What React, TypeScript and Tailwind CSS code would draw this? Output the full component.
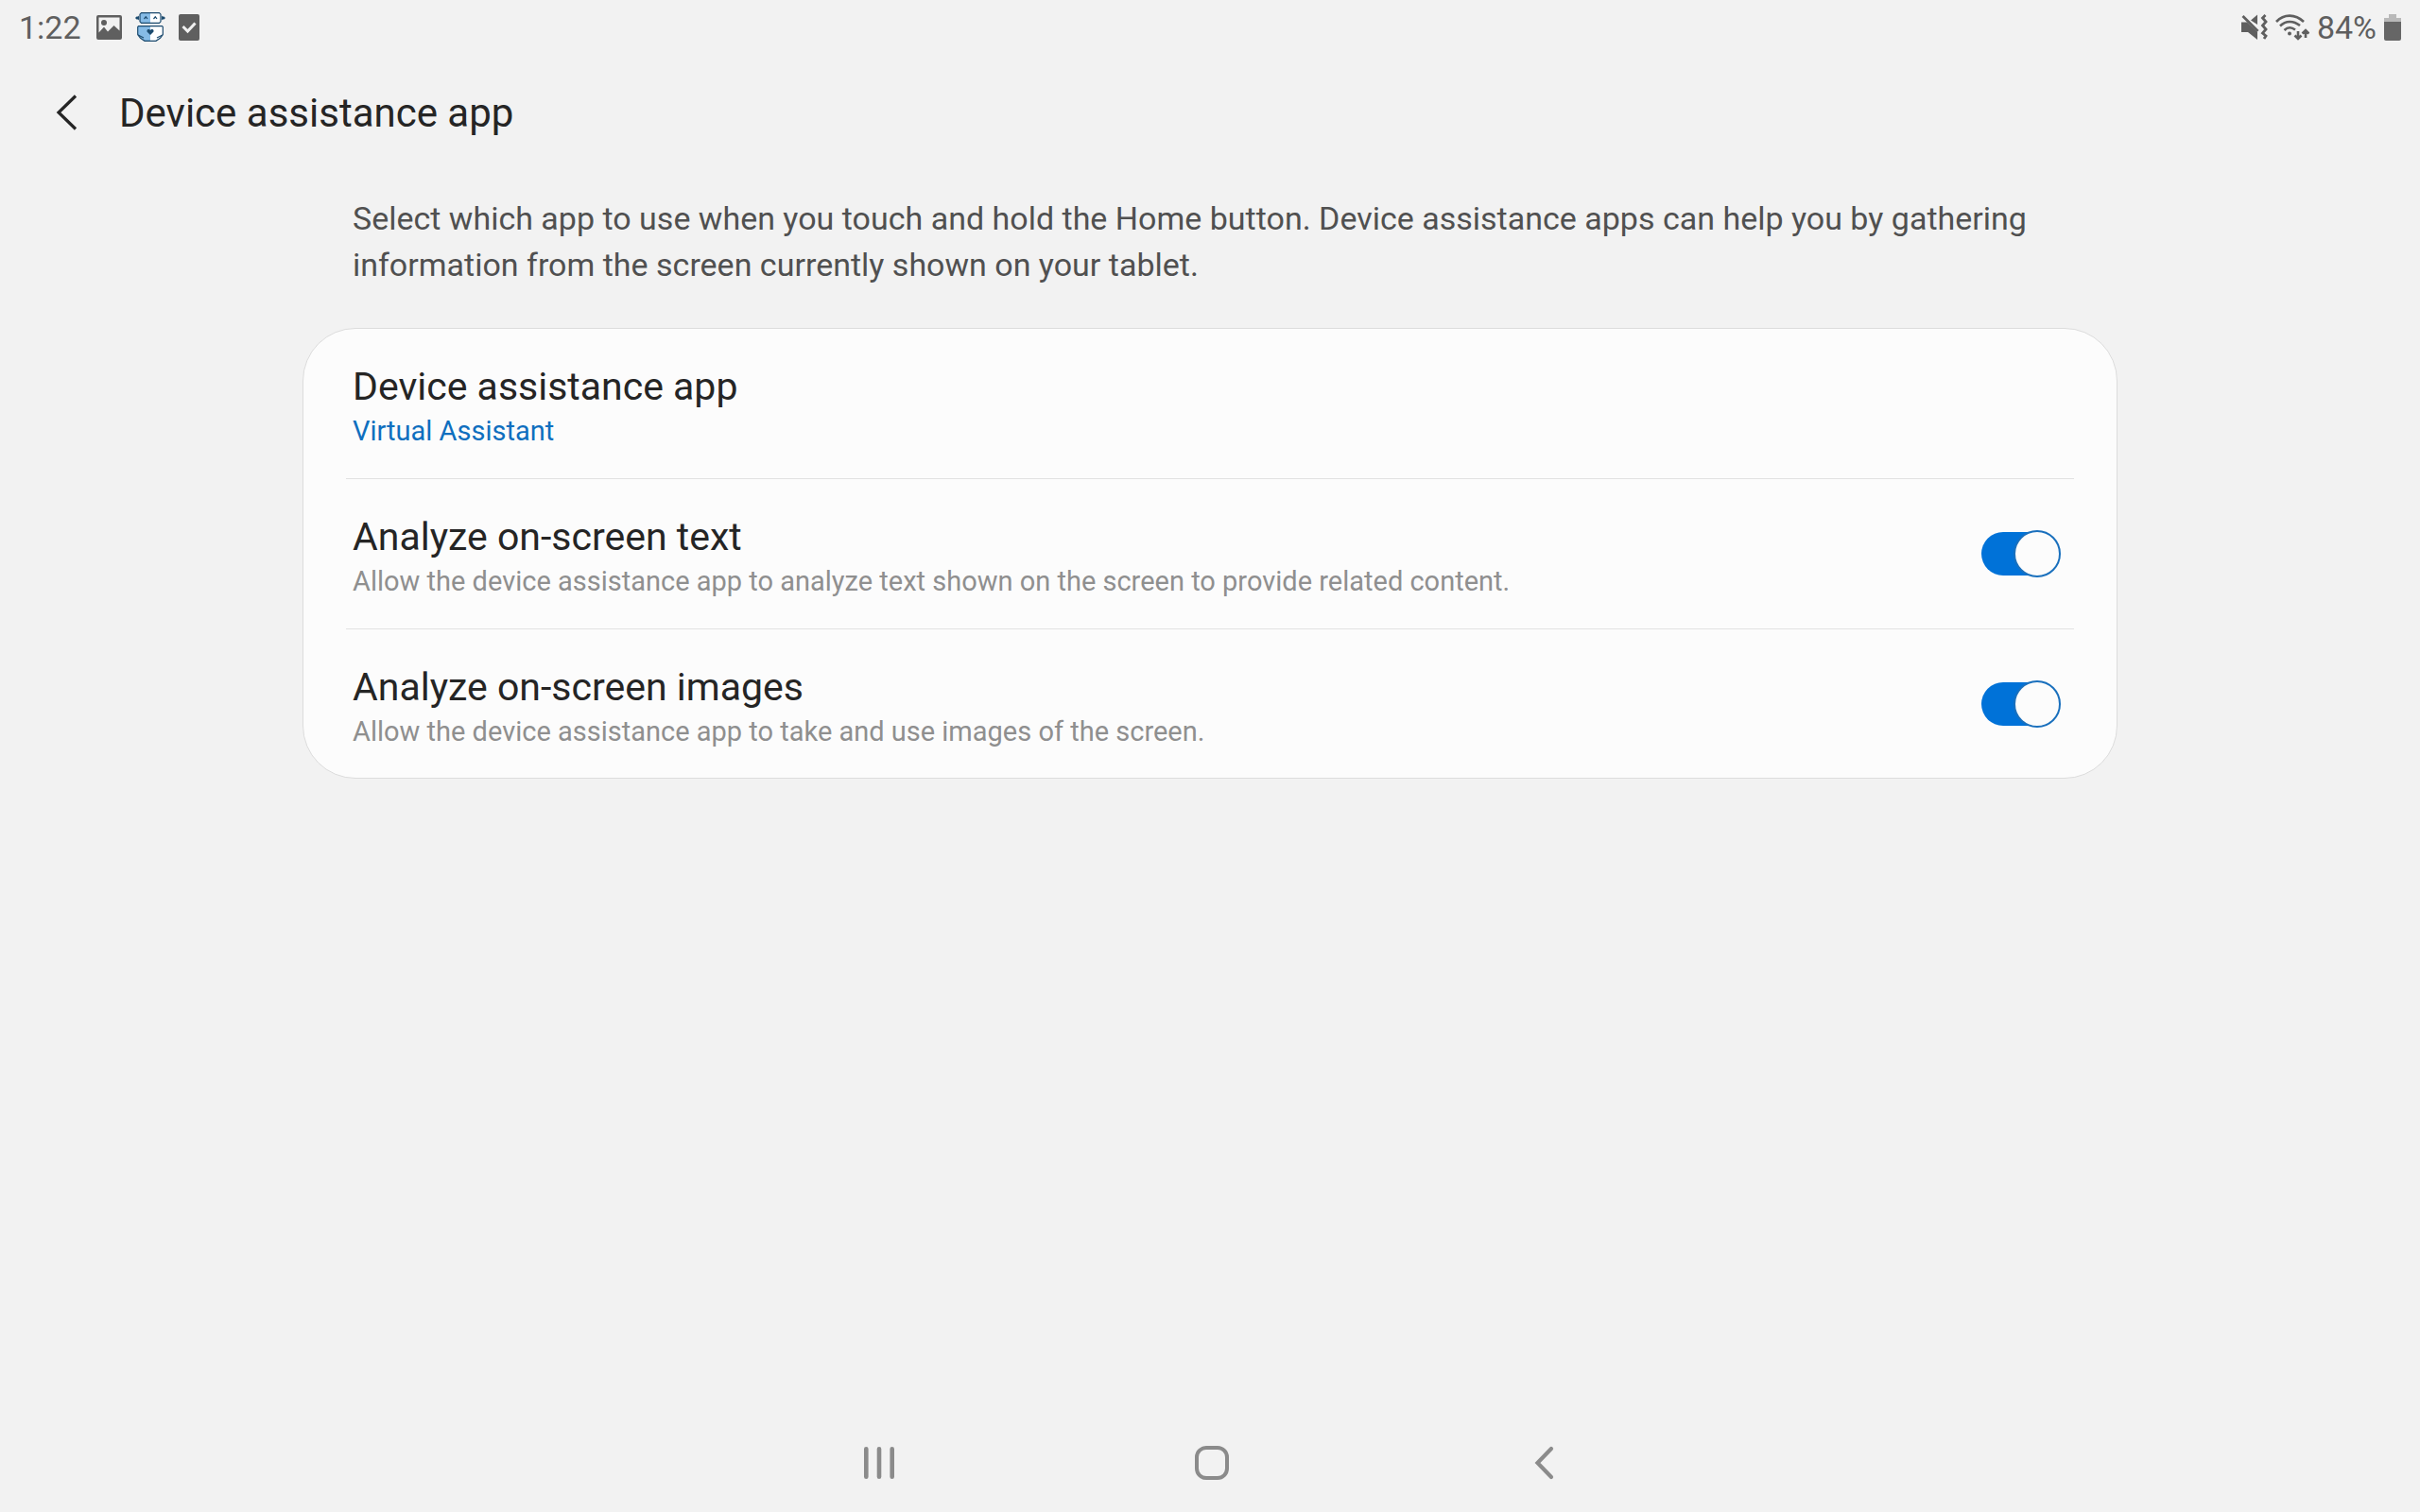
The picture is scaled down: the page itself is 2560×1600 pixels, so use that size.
import { useState } from "react";

const ROWS = [
  {
    id: "analyze-text",
    title: "Analyze on-screen text",
    note: "Allow the device assistance app to analyze text shown on the screen to provide related content.",
  },
  {
    id: "analyze-images",
    title: "Analyze on-screen images",
    note: "Allow the device assistance app to take and use images of the screen.",
  },
];

function PictureIcon() {
  return (
    <svg width="27" height="26" viewBox="0 0 27 26" aria-hidden="true">
      <path
        fill="#5f5f5f"
        fillRule="evenodd"
        d="M2 0H25Q27 0 27 2V24Q27 26 25 26H2Q0 26 0 24V2Q0 0 2 0ZM2.5 2.5V18.5L8 12.5L12 17.5L18.5 11L24.5 16.5V2.5Z"
      />
      <circle cx="8" cy="8" r="3" fill="#5f5f5f" />
    </svg>
  );
}

function RobotIcon() {
  return (
    <svg width="32" height="32" viewBox="0 0 32 32" aria-hidden="true">
      <path fill="#fff" d="M16 1H26L27 2V10L26 11H16ZM16 15H29V24L26 27L22 30H16Z" />
      <path fill="#86bbe6" d="M16 1H6L5 2V10L6 11H16ZM16 15H3V24L6 27L10 30H16Z" />
      <g fill="none" stroke="#1b4a6e" strokeWidth="1.2">
        <path d="M6.500 0.700H25.500L27 2.200V9.800L25.500 11.300H6.500L5 9.800V2.200Z" />
        <path d="M3.500 14.600H28.500L29.300 15.400V23.500L26.500 27.300L22 30.300H10L5.500 27.300L2.700 23.500V15.400Z" />
        <path d="M9.500 7L11.300 4.800L13 7M19.500 7L21.300 4.800L23 7M3 24L9 27M29 24L23 27" />
      </g>
      <path
        fill="#1b4a6e"
        d="M0 6L1.500 4.500H3L4 3.500V8.500L3 7.500H1.500ZM32 6L30.500 4.500H29L28 3.500V8.500L29 7.500H30.500ZM16 24L12.500 20.500V19L13.500 18H15L16 19L17 18H18.500L19.500 19V20.500Z"
      />
    </svg>
  );
}

function TaskIcon() {
  return (
    <svg width="22" height="28" viewBox="0 0 22 28" aria-hidden="true">
      <rect width="22" height="28" rx="2" fill="#5f5f5f" />
      <path d="M4.500 13L9.500 18L17.500 9.500" fill="none" stroke="#f1f1f1" strokeWidth="3" />
    </svg>
  );
}

function MuteVibrateIcon() {
  return (
    <svg width="28" height="28" viewBox="0 0 28 28" aria-hidden="true">
      <path fill="#5f5f5f" d="M0 8.500H6L17 19V27L7 19H0ZM10 6.500L17 0.500V11Z" />
      <path
        d="M1.500 2L17.500 18M25.500 1L22.500 4L26 8L22.500 12L26 16L22.500 20L26 23L24 26"
        fill="none"
        stroke="#5f5f5f"
        strokeWidth="2.800"
      />
    </svg>
  );
}

function WifiIcon() {
  return (
    <svg width="36" height="28" viewBox="0 0 36 28" aria-hidden="true">
      <g fill="none" stroke="#5f5f5f" strokeWidth="2.600">
        <path d="M1 8C9 -0.500 21 -0.500 30 8M5 12.500C11 6.500 19 6.500 26 12M9.500 17C13 13.500 17 13.500 21 16.500" />
        <path d="M24 18V26M20.500 22.500L24 26L27.500 22.500M32 25V17M28.500 20.500L32 17L35.500 20.500" />
      </g>
      <circle cx="15" cy="20.500" r="2" fill="#5f5f5f" />
    </svg>
  );
}

function BatteryIcon() {
  return (
    <svg width="18" height="28" viewBox="0 0 18 28" aria-hidden="true">
      <path fill="#b9b9b9" d="M5 0H13V4H18V8H0V4H5Z" />
      <path fill="#666" d="M0 8H18V26Q18 28 16 28H2Q0 28 0 26Z" />
    </svg>
  );
}

function Switch({ id }: { id: string }) {
  const [on, setOn] = useState(true);
  return (
    <span className="relative flex h-[50px] w-[84px] shrink-0 items-center">
      <input
        id={id}
        type="checkbox"
        role="switch"
        checked={on}
        onChange={() => setOn(!on)}
        className="peer h-[46px] w-[82px] cursor-pointer appearance-none rounded-full bg-[#9a9a9a] checked:bg-[#0072d8]"
      />
      <span className="pointer-events-none absolute left-0 top-0 size-[50px] rounded-full border-2 border-[#9a9a9a] bg-[#fcfcfc] peer-checked:left-auto peer-checked:right-0 peer-checked:border-[#1a70bd]" />
    </span>
  );
}

export default function App() {
  return (
    <div className="flex min-h-screen flex-col bg-[#f2f2f2] font-['Roboto',sans-serif] text-[#252525]">
      <div className="flex h-[57px] items-center justify-between px-5 text-[34px] leading-10 text-[#5f5f5f]">
        <div className="flex items-center">
          <span>1:22</span>
          <span className="ml-4 flex items-center gap-[14px]">
            <PictureIcon />
            <RobotIcon />
            <TaskIcon />
          </span>
        </div>
        <div className="flex items-center gap-2">
          <MuteVibrateIcon />
          <WifiIcon />
          <span>84%</span>
          <BatteryIcon />
        </div>
      </div>

      <header className="flex h-[123px] items-center gap-[43px] pl-[59px]">
        <button type="button" aria-label="Navigate up">
          <svg width="24" height="38" viewBox="0 0 24 38" aria-hidden="true">
            <path d="M21 1.500L3 19L21 36.500" fill="none" stroke="#252525" strokeWidth="3.200" />
          </svg>
        </button>
        <h1 className="pt-0.5 text-[42px] leading-[50px]">Device assistance app</h1>
      </header>

      <main className="mx-auto w-3/4 grow pt-[27px]">
        <p className="px-[53px] text-[34px] leading-[49px] text-[#505050]">
          Select which app to use when you touch and hold the Home button. Device assistance apps can help you by
          gathering information from the screen currently shown on your tablet.
        </p>

        <section className="mt-[42px] rounded-[56px] border border-[#dcdcdc] bg-[#fcfcfc] px-[45px]">
          <button
            type="button"
            className="flex h-[159px] w-full cursor-pointer flex-col justify-center border-b border-[#e2e2e2] px-[7px] pt-2 text-left"
          >
            <span className="text-[41px] leading-[50px]">Device assistance app</span>
            <span className="text-[29px] leading-[44px] text-[#0f6fbf]">Virtual Assistant</span>
          </button>
          {ROWS.map((row) => (
            <label
              key={row.id}
              htmlFor={row.id}
              className="flex h-[159px] cursor-pointer items-center justify-between border-b border-[#e2e2e2] pl-[7px] pr-[14px] last:h-[157px] last:border-b-0"
            >
              <span className="flex flex-col pt-2">
                <span className="text-[41px] leading-[50px]">{row.title}</span>
                <span className="text-[29px] leading-[44px] text-[#8f8f8f]">{row.note}</span>
              </span>
              <Switch id={row.id} />
            </label>
          ))}
        </section>
      </main>

      <nav className="flex h-[104px] items-center justify-center gap-[316px] pl-1">
        <button type="button" aria-label="Recents">
          <svg width="36" height="36" viewBox="0 0 36 36" aria-hidden="true">
            <path d="M4.300 3.300V32.700M18 3.300V32.700M31.700 3.300V32.700" stroke="#8b8b8b" strokeWidth="4.600" strokeLinecap="round" />
          </svg>
        </button>
        <button type="button" aria-label="Home">
          <svg width="36" height="36" viewBox="0 0 36 36" aria-hidden="true">
            <rect x="2" y="2" width="32" height="32" rx="10" fill="none" stroke="#8b8b8b" strokeWidth="4" />
          </svg>
        </button>
        <button type="button" aria-label="Back">
          <svg width="36" height="36" viewBox="0 0 36 36" aria-hidden="true">
            <path d="M25 3L10.500 18L25 33" fill="none" stroke="#8b8b8b" strokeWidth="4.200" strokeLinecap="round" />
          </svg>
        </button>
      </nav>
    </div>
  );
}
